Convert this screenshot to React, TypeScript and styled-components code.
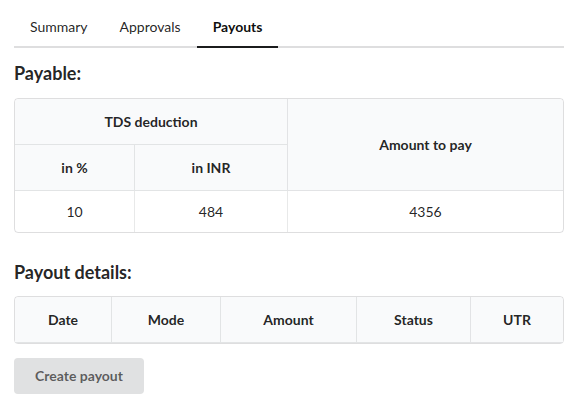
import React from 'react';
import styled, { createGlobalStyle } from 'styled-components';

const GlobalStyle = createGlobalStyle`
  *, *::before, *::after {
    box-sizing: border-box;
  }
  body {
    margin: 0;
    background: #ffffff;
    font-family: Lato, 'Helvetica Neue', Arial, sans-serif;
    font-size: 14px;
    color: rgba(0, 0, 0, 0.87);
  }
`;

const tabs = ['Summary', 'Approvals', 'Payouts'];
const payableCols = [119, 153, 276];
const payoutCols = [96, 109, 136, 114, 93];
const payoutHeaders = ['Date', 'Mode', 'Amount', 'Status', 'UTR'];

export default function App() {
  return (
    <Page>
      <GlobalStyle />
      <TabMenu>
        {tabs.map((t) => (
          <TabItem key={t} $active={t === 'Payouts'}>
            {t}
          </TabItem>
        ))}
      </TabMenu>

      <Heading>Payable:</Heading>
      <Table>
        <colgroup>
          {payableCols.map((w, i) => (
            <Col key={i} $w={w} />
          ))}
        </colgroup>
        <thead>
          <tr>
            <HeadCell colSpan={2}>TDS deduction</HeadCell>
            <HeadCell rowSpan={2}>Amount to pay</HeadCell>
          </tr>
          <tr>
            <HeadCell>in %</HeadCell>
            <HeadCell>in INR</HeadCell>
          </tr>
        </thead>
        <tbody>
          <tr>
            <Cell>10</Cell>
            <Cell>484</Cell>
            <Cell>4356</Cell>
          </tr>
        </tbody>
      </Table>

      <Heading $spaced>Payout details:</Heading>
      <Table>
        <colgroup>
          {payoutCols.map((w, i) => (
            <Col key={i} $w={w} />
          ))}
        </colgroup>
        <thead>
          <tr>
            {payoutHeaders.map((h) => (
              <HeadCell key={h}>{h}</HeadCell>
            ))}
          </tr>
        </thead>
      </Table>

      <CreateButton type="button">Create payout</CreateButton>
    </Page>
  );
}

const Page = styled.div`
  width: 550px;
  margin-left: 14px;
  padding-top: 8px;
`;

const TabMenu = styled.div`
  display: flex;
  border-bottom: 2px solid rgba(34, 36, 38, 0.15);
`;

const TabItem = styled.div<{ $active?: boolean }>`
  padding: 12px 16px;
  line-height: 1;
  font-size: 14px;
  margin-bottom: -2px;
  border-bottom: 2px solid ${(p) => (p.$active ? '#1b1c1d' : 'transparent')};
  font-weight: ${(p) => (p.$active ? 700 : 400)};
  color: ${(p) => (p.$active ? 'rgba(0, 0, 0, 0.95)' : 'rgba(0, 0, 0, 0.87)')};
`;

const Heading = styled.h3<{ $spaced?: boolean }>`
  font-size: 18px;
  font-weight: 700;
  line-height: 1.28571em;
  margin: ${(p) => (p.$spaced ? '28px 0 12px' : '14px 0 13px')};
  color: rgba(0, 0, 0, 0.87);
`;

const Table = styled.table`
  width: 550px;
  table-layout: fixed;
  border-collapse: separate;
  border-spacing: 0;
  border: 1px solid rgba(34, 36, 38, 0.15);
  border-radius: 4px;
  text-align: center;
  font-size: 14px;
  line-height: 19px;
`;

const Col = styled.col<{ $w: number }>`
  width: ${(p) => p.$w}px;
`;

const HeadCell = styled.th`
  padding: 13px 11px;
  background: #f9fafb;
  font-weight: 700;
  color: rgba(0, 0, 0, 0.87);
  border-bottom: 1px solid rgba(34, 36, 38, 0.1);
  border-left: 1px solid rgba(34, 36, 38, 0.1);
  &:first-child {
    border-left: none;
  }
  tr:first-child > &:first-child {
    border-top-left-radius: 4px;
  }
  tr:first-child > &:last-child {
    border-top-right-radius: 4px;
  }
`;

const Cell = styled.td`
  padding: 11px;
  color: rgba(0, 0, 0, 0.87);
  border-left: 1px solid rgba(34, 36, 38, 0.1);
  &:first-child {
    border-left: none;
  }
`;

const CreateButton = styled.button`
  margin-top: 14px;
  padding: 11px 21px;
  border: none;
  border-radius: 4px;
  background: #e0e1e2;
  color: rgba(0, 0, 0, 0.6);
  font-family: Lato, 'Helvetica Neue', Arial, sans-serif;
  font-size: 14px;
  font-weight: 700;
  line-height: 1;
  cursor: pointer;
`;
